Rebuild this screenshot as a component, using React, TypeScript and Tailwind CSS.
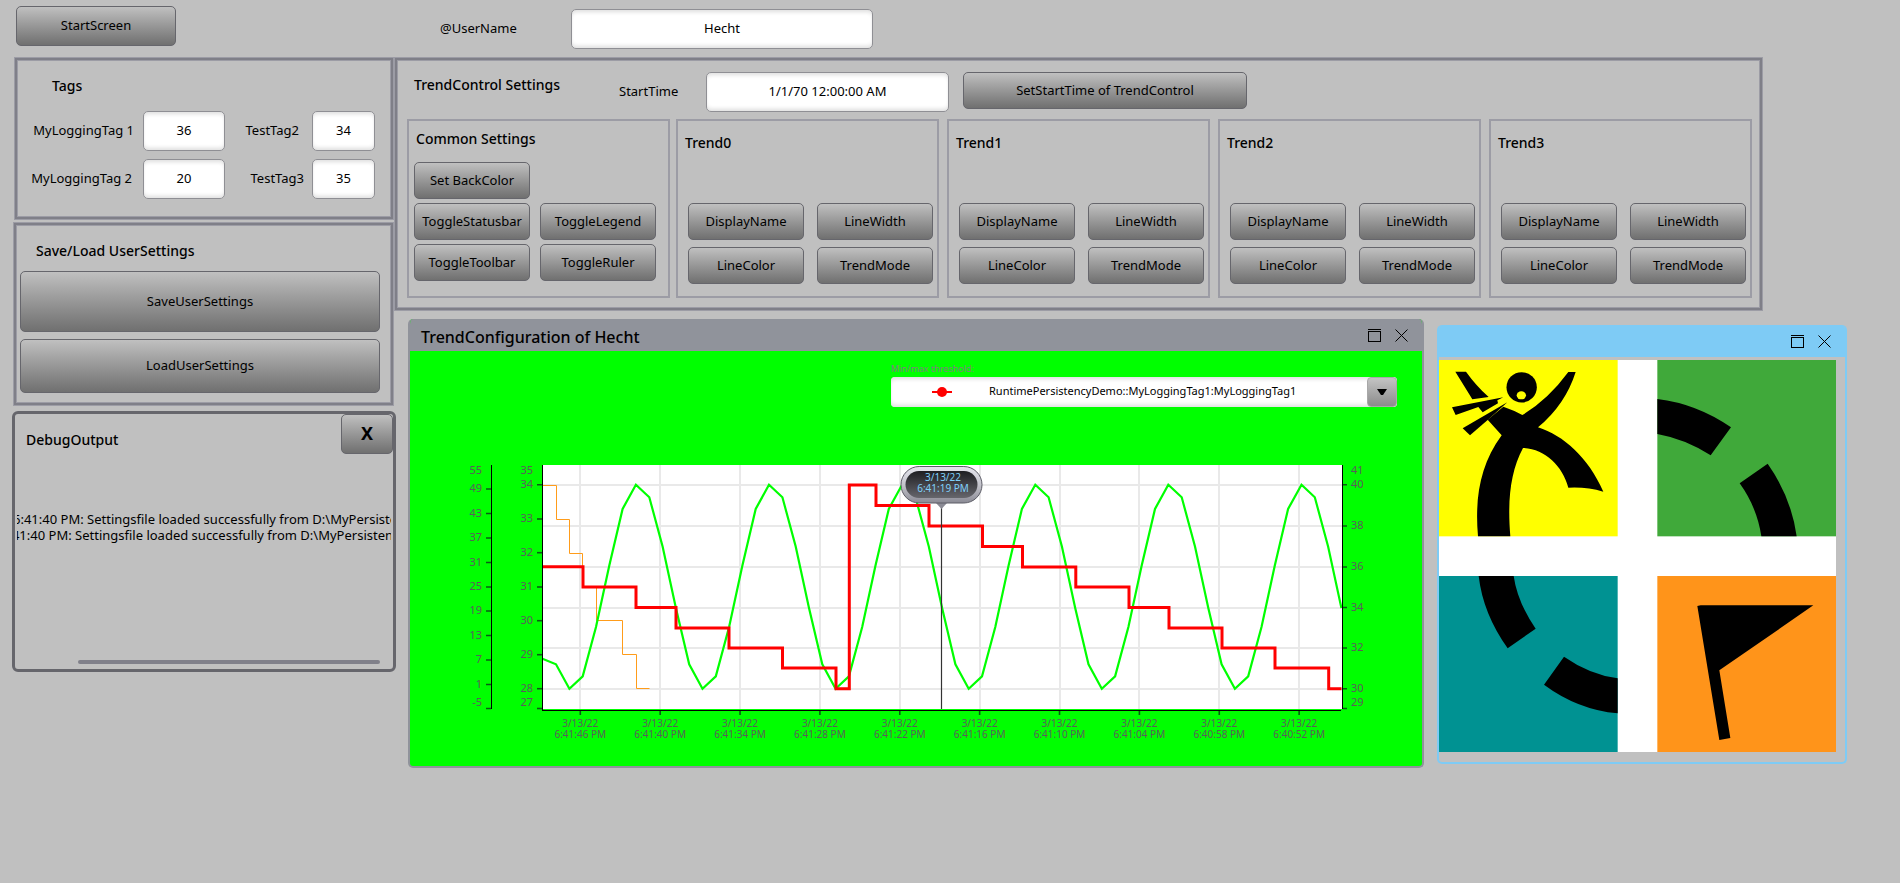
import type { ReactNode } from 'react';

const STEP = 13.31;
const GRID_STEP = 79.87;
const FIRST_GRID_X = 580.3;

/* One period of the green wave, ten samples long, starting at the minimum. */
const WAVE = [688.7, 676.3, 627, 565.5, 509, 484.7, 497.3, 546.4, 608, 664.3];

const wavePoints = ['542.5,658.7', '556,664.3']
  .concat(Array.from({ length: 59 }, (_, i) => `${(569.4 + i * STEP).toFixed(1)},${WAVE[i % 10]}`))
  .join(' ');

const RED_PATH =
  'M542.5 566.7H583V587H636V607.5H676V628H729V648H782.5V668H836V688.7H849.3V485H876V505.5H929V526H982.5V546.5H1022.5V567H1075.8V587H1129V607.5H1169V628H1222V648H1275V668H1328.7V688.7H1341.5';

const ORANGE_PATH =
  'M542.5 485.5H556.5V519.5H569.5V553.5H582.5V587.5H596.5V620.5H622.5V654.5H636.5V688.5H649.5';

const TIMES = ['46', '40', '34', '28', '22', '16', '10', '04', '58', '52'].map(
  (s, i) => `6:${i < 8 ? '41' : '40'}:${s} PM`,
);

type Tick = { v: string; y: number; label?: number };

const OUTER_AXIS: Tick[] = [
  { v: '49', y: 489 },
  { v: '43', y: 513.5 },
  { v: '37', y: 538 },
  { v: '31', y: 562.5 },
  { v: '25', y: 587 },
  { v: '19', y: 611 },
  { v: '13', y: 635.5 },
  { v: '7', y: 660 },
  { v: '1', y: 684.5 },
  { v: '-5', y: 708.5, label: 702 },
];

const INNER_AXIS: Tick[] = [
  { v: '34', y: 484.7 },
  { v: '33', y: 519 },
  { v: '32', y: 552.7 },
  { v: '31', y: 587 },
  { v: '30', y: 620.7 },
  { v: '29', y: 654.7 },
  { v: '28', y: 688.7 },
  { v: '27', y: 708.5, label: 702 },
];

const RIGHT_AXIS: Tick[] = [
  { v: '40', y: 484.7 },
  { v: '38', y: 526 },
  { v: '36', y: 567 },
  { v: '34', y: 607.5 },
  { v: '32', y: 648 },
  { v: '30', y: 688.7 },
  { v: '29', y: 708.5, label: 702 },
];

function Button({ className = '', children }: { className?: string; children: ReactNode }) {
  return (
    <button
      type="button"
      className={`rounded-[5px] border border-[#66666c] bg-linear-to-b from-[#c0c0c0] to-[#707070] pb-[2px] text-center leading-4 whitespace-nowrap text-black ${className}`}
    >
      {children}
    </button>
  );
}

function Field({ id, value, label, className = '' }: { id: string; value: string; label?: string; className?: string }) {
  return (
    <input
      id={id}
      aria-label={label}
      defaultValue={value}
      className={`h-10 min-w-0 rounded-[5px] border border-[#8f8f94] bg-white pb-[2px] text-center text-black shadow-[inset_0_4px_4px_-2px_#dedede,inset_0_-4px_4px_-2px_#dedede] ${className}`}
    />
  );
}

const FRAME = 'border border-[#9c9ca5] shadow-[inset_0_0_0_2px_#7f7f88,inset_0_0_0_3px_#9c9ca5]';

function TagsPanel() {
  return (
    <section className={`ml-[2px] h-[163px] pt-[18px] ${FRAME}`}>
      <h2 className="pl-[37px] text-sm leading-5 font-medium">Tags</h2>
      <div className="mt-[15px] grid grid-cols-[128px_82px_87px_63px] items-center gap-y-2">
        <label htmlFor="tag1" className="pr-[9px] text-right">MyLoggingTag 1</label>
        <Field id="tag1" value="36" />
        <label htmlFor="tag2" className="pr-[13px] text-right">TestTag2</label>
        <Field id="tag2" value="34" />
        <label htmlFor="tag3" className="pr-[11px] text-right">MyLoggingTag 2</label>
        <Field id="tag3" value="20" />
        <label htmlFor="tag4" className="pr-2 text-right">TestTag3</label>
        <Field id="tag4" value="35" />
      </div>
    </section>
  );
}

function UserSettingsPanel() {
  return (
    <section className={`mt-[2px] ml-px h-[184px] pt-[18px] pr-[13px] pl-[6px] ${FRAME}`}>
      <h2 className="pl-4 text-sm leading-5 font-medium">Save/Load UserSettings</h2>
      <div className="mt-[10px] flex flex-col gap-[7px]">
        <Button className="h-[61px]">SaveUserSettings</Button>
        <Button className="h-[54px]">LoadUserSettings</Button>
      </div>
    </section>
  );
}

function DebugPanel() {
  return (
    <section className="mt-[5px] -mr-[2px] flex h-[261px] flex-col rounded-[6px] border-[3px] border-[#66666c]">
      <div className="flex items-start justify-between">
        <h2 className="pt-4 pl-[11px] text-sm leading-5 font-medium">DebugOutput</h2>
        <Button className="h-10 w-[52px] text-lg font-bold">X</Button>
      </div>
      <div className="mx-[2px] mt-[57px] overflow-hidden leading-4 whitespace-nowrap">
        <p className="-ml-1">6:41:40 PM: Settingsfile loaded successfully from D:\MyPersistency</p>
        <p className="-ml-4">6:41:40 PM: Settingsfile loaded successfully from D:\MyPersistency</p>
      </div>
      <div className="mt-auto mr-[13px] mb-[5px] ml-[63px] h-1 rounded-full bg-[#80808a]" />
    </section>
  );
}

function TrendGroup({ name }: { name: string }) {
  return (
    <section className="border-2 border-[#9c9ca5] pt-3 pr-1 pl-[7px]">
      <h3 className="text-sm leading-5 font-medium">{name}</h3>
      <div className="mt-[50px] ml-[3px] grid grid-cols-2 gap-x-[13px] gap-y-[7px]">
        <Button className="h-[37px]">DisplayName</Button>
        <Button className="h-[37px]">LineWidth</Button>
        <Button className="h-[37px]">LineColor</Button>
        <Button className="h-[37px]">TrendMode</Button>
      </div>
    </section>
  );
}

function TrendSettings() {
  return (
    <section className={`h-[254px] max-w-[1369px] pt-[14px] ${FRAME}`}>
      <div className="flex items-start pl-[19px]">
        <h2 className="w-[205px] pt-[3px] text-sm leading-5 font-medium">TrendControl Settings</h2>
        <label htmlFor="start" className="w-[87px] pt-[9px] leading-5">StartTime</label>
        <Field id="start" value="1/1/70 12:00:00 AM" className="w-[243px]" />
        <Button className="ml-[14px] h-[37px] w-[284px]">SetStartTime of TrendControl</Button>
      </div>
      <div className="mt-[7px] flex h-[179px] gap-[6px] pr-[10px] pl-3">
        <section className="w-[263px] border-2 border-[#9c9ca5] pt-2 pr-3 pl-[5px]">
          <h3 className="pl-[2px] text-sm leading-5 font-medium">Common Settings</h3>
          <div className="mt-[13px] grid grid-cols-2 gap-x-[10px] gap-y-1">
            <Button className="h-[37px]">Set BackColor</Button>
            <span />
            <Button className="h-[37px]">ToggleStatusbar</Button>
            <Button className="h-[37px]">ToggleLegend</Button>
            <Button className="h-[37px]">ToggleToolbar</Button>
            <Button className="h-[37px]">ToggleRuler</Button>
          </div>
        </section>
        <div className="grid flex-1 grid-cols-4 gap-2">
          {['Trend0', 'Trend1', 'Trend2', 'Trend3'].map((name) => (
            <TrendGroup key={name} name={name} />
          ))}
        </div>
      </div>
    </section>
  );
}

function WindowButtons() {
  return (
    <div className="flex gap-[14px] pt-px">
      <button type="button" aria-label="Maximize" className="h-[14px] w-[13px]">
        <svg viewBox="0 0 13 14" className="block h-[14px] w-[13px]" fill="none" stroke="#000" shapeRendering="crispEdges">
          <path d="M0 .5H13M.5 2.5H12.5V12.5H.5Z" />
        </svg>
      </button>
      <button type="button" aria-label="Close" className="h-[14px] w-[13px]">
        <svg viewBox="0 0 13 14" className="block h-[14px] w-[13px]" fill="none" stroke="#000">
          <path d="M.5 .5L12.5 12.5M12.5 .5L.5 12.5" />
        </svg>
      </button>
    </div>
  );
}

function TrendChart() {
  return (
    <svg viewBox="410 407 1012 359" className="block h-auto w-full" fontSize="11" fill="#5c5c5c">
      <rect x="543" y="465" width="799" height="244" fill="#fff" />
      <g stroke="#e9e9e9" strokeWidth="2" shapeRendering="crispEdges">
        {TIMES.map((t, i) => (
          <path key={t} d={`M${FIRST_GRID_X + i * GRID_STEP} 465V709`} />
        ))}
        {RIGHT_AXIS.slice(0, 6).map((t) => (
          <path key={t.v} d={`M543 ${t.y}H1342`} />
        ))}
      </g>

      <g fill="none">
        <path d={ORANGE_PATH} stroke="#ff9c1a" />
        <polyline points={wavePoints} stroke="#00ff00" strokeWidth="2.2" />
        <path d={RED_PATH} stroke="#ff0000" strokeWidth="3" />
      </g>

      <g stroke="#000" shapeRendering="crispEdges">
        <path d="M491.5 465V709M542.5 465V711M1342.5 465V709M542 710.5H1341" />
      </g>
      <g stroke="#0a5a14" strokeWidth="1.6">
        {OUTER_AXIS.map((t) => <path key={t.v} d={`M486 ${t.y}h5`} />)}
        {INNER_AXIS.map((t) => <path key={t.v} d={`M537 ${t.y}h5`} />)}
        {RIGHT_AXIS.map((t) => <path key={t.v} d={`M1343 ${t.y}h4`} />)}
        {TIMES.map((t, i) => <path key={t} d={`M${FIRST_GRID_X + i * GRID_STEP} 711v4`} />)}
      </g>

      <g textAnchor="end">
        <text x="482" y="474">55</text>
        {OUTER_AXIS.map((t) => <text key={t.v} x="482" y={(t.label ?? t.y - 1) + 4}>{t.v}</text>)}
        <text x="533" y="474">35</text>
        {INNER_AXIS.map((t) => <text key={t.v} x="533" y={(t.label ?? t.y - 1) + 4}>{t.v}</text>)}
      </g>
      <text x="1351" y="474">41</text>
      {RIGHT_AXIS.map((t) => <text key={t.v} x="1351" y={(t.label ?? t.y - 1) + 4}>{t.v}</text>)}

      <g textAnchor="middle" fontSize="10">
        {TIMES.map((t, i) => (
          <g key={t}>
            <text x={FIRST_GRID_X + i * GRID_STEP} y="727">3/13/22</text>
            <text x={FIRST_GRID_X + i * GRID_STEP} y="738">{t}</text>
          </g>
        ))}
      </g>

      <defs>
        <linearGradient id="bezel" x1="0" y1="0" x2="0" y2="1">
          <stop offset="0" stopColor="#e6e6ee" />
          <stop offset="0.5" stopColor="#c4c4cc" />
          <stop offset="1" stopColor="#8a8a94" />
        </linearGradient>
        <linearGradient id="face" x1="0" y1="0" x2="0" y2="1">
          <stop offset="0" stopColor="#1e1e22" />
          <stop offset="1" stopColor="#66666c" />
        </linearGradient>
      </defs>
      <path d="M941.5 507V709" stroke="#333" strokeWidth="1.2" />
      <path d="M936 503H947L941.5 509Z" fill="#8a8a94" />
      <rect x="901" y="466.5" width="81" height="36.5" rx="18.2" fill="url(#bezel)" stroke="#5c5c66" />
      <rect x="905.5" y="471" width="72" height="27" rx="13.5" fill="url(#face)" />
      <g textAnchor="middle" fontSize="10" fill="#7fd0fa">
        <text x="943" y="481">3/13/22</text>
        <text x="943" y="492">6:41:19 PM</text>
      </g>
    </svg>
  );
}

function TrendWindow() {
  return (
    <section className="w-[1016px] overflow-hidden rounded-[5px] border-2 border-t-0 border-[#90939b] bg-[#00ff00]">
      <header className="flex h-8 items-center justify-between bg-[#90939b] pr-[14px] pl-[11px]">
        <h2 className="pt-1 text-base leading-5 font-medium">TrendConfiguration of Hecht</h2>
        <WindowButtons />
      </header>
      <div className="ml-auto w-[531px] pt-3 pr-[25px]">
        <label htmlFor="threshold" className="block h-[14px] text-[9px] leading-3 text-[#808080]">
          Min/max threshold:
        </label>
        <div className="relative h-[30px]">
          <select
            id="threshold"
            className="h-full w-full appearance-none rounded-[4px] bg-white pr-8 pb-px pl-[98px] text-[11px] text-black shadow-[inset_0_4px_4px_-2px_#dedede,inset_0_-4px_4px_-2px_#dedede]"
          >
            <option>RuntimePersistencyDemo::MyLoggingTag1:MyLoggingTag1</option>
          </select>
          <svg viewBox="0 0 20 12" className="pointer-events-none absolute top-[9px] left-[41px] h-3 w-5">
            <path d="M0 6H20" stroke="#f00" strokeWidth="2" />
            <circle cx="10" cy="6" r="5" fill="#f00" />
          </svg>
          <span className="pointer-events-none absolute inset-y-0 right-0 flex w-[30px] items-center justify-center rounded-[4px] border border-[#a8a8a8] bg-linear-to-b from-[#c4c4c4] to-[#8c8c8c]">
            <svg viewBox="0 0 10 6" className="h-[6px] w-[10px]">
              <path d="M0 0H10L6 6H4Z" />
            </svg>
          </span>
        </div>
      </div>
      <TrendChart />
    </section>
  );
}

function PictureWindow() {
  return (
    <section className="mt-[6px] h-[439px] w-[410px] overflow-hidden rounded-[5px] border-2 border-t-0 border-[#7ecbf5]">
      <header className="flex h-8 items-center justify-end bg-[#7ecbf5] pt-px pr-[14px]">
        <WindowButtons />
      </header>
      <svg viewBox="57 150 1191 1176" className="mt-[3px] block h-[392px] w-[397px]">
        <rect x="57" y="150" width="1191" height="1176" fill="#fff" />
        <rect x="57" y="150" width="536" height="529" fill="#ffff00" />
        <rect x="712" y="150" width="536" height="529" fill="#40a93a" />
        <rect x="57" y="798" width="536" height="528" fill="#009292" />
        <rect x="712" y="798" width="536" height="528" fill="#ff941a" />

        <path d="M712 267Q830 281 933 352L872 436Q796 387 712 372Z" />
        <path d="M1043 461Q1114 562 1130 679H1024Q1011 592 959 520Z" />
        <path d="M176 798H281Q292 876 347 956L263 1015Q189 911 176 798Z" />
        <path d="M432 1040Q508 1093 593 1105V1210Q473 1199 372 1124Z" />
        <path d="M832 888L842 886H1180L898 1081L931 1284L898 1290Z" />

        <path d="M106 185H138Q168 227 206 261L157 268Z" />
        <path d="M96 292L250 262L232 271L234 280L188 307L175 291L107 315Z" />
        <path d="M128 355L262 277L203 330L150 376Z" />
        <path d="M250 290Q280 300 307 315Q384 269 445 186H467Q436 284 354 352C430 376 506 443 550 545Q500 530 445 533C427 467 375 417 309 414C271 486 262 570 271 679H174C164 565 180 464 245 376L203 329Z" />
        <circle cx="305" cy="232" r="45.5" />
        <ellipse cx="304" cy="256" rx="14" ry="12" fill="#ffff00" />
      </svg>
    </section>
  );
}

export default function App() {
  return (
    <div className="min-h-screen bg-[#c0c0c0] font-['Noto_Sans',sans-serif] text-[13px] text-black">
      <header className="flex h-[57px] items-start pt-[6px] pl-4">
        <Button className="h-10 w-40">StartScreen</Button>
        <label htmlFor="user" className="ml-[264px] w-[131px] pt-3 leading-5">@UserName</label>
        <div className="pt-[3px]">
          <Field id="user" value="Hecht" className="w-[302px]" />
        </div>
      </header>
      <main className="flex items-start">
        <div className="ml-3 w-[382px] shrink-0">
          <TagsPanel />
          <UserSettingsPanel />
          <DebugPanel />
        </div>
        <div className="min-w-0 flex-1">
          <TrendSettings />
          <div className="mt-2 ml-[14px] flex items-start gap-[13px]">
            <TrendWindow />
            <PictureWindow />
          </div>
        </div>
      </main>
    </div>
  );
}
